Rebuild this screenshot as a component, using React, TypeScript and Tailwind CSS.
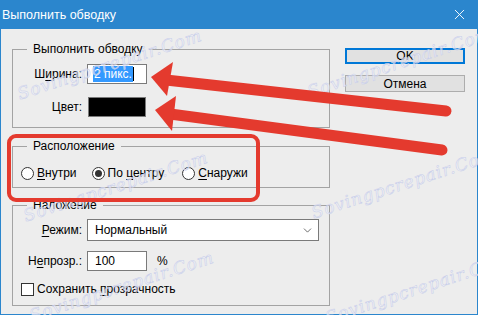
import React from 'react';
import { ChevronDown, X } from 'lucide-react';

const font = "font-['Segoe_UI','Liberation_Sans',Arial,sans-serif]";

const U = ({ children }: { children: React.ReactNode }) => (
  <span className="underline underline-offset-2 decoration-1">{children}</span>
);

const Label = ({ children }: { children: React.ReactNode }) => (
  <span className="w-[69px] shrink-0 text-right">{children}</span>
);

const Radio = ({ checked, children }: { checked?: boolean; children: React.ReactNode }) => (
  <div className="flex items-center gap-[3px]">
    <span className="flex h-[13px] w-[13px] items-center justify-center rounded-full border border-[#333] bg-white">
      {checked && <span className="h-[7px] w-[7px] rounded-full bg-[#333]" />}
    </span>
    <span>{children}</span>
  </div>
);

const marks = [
  { left: 18, top: 84 },
  { left: 24, top: 206 },
  { left: 30, top: 306 },
  { left: 308, top: 82 },
  { left: 312, top: 203 },
  { left: 326, top: 308 },
];

export default function App() {
  return (
    <div className={`relative h-[315px] w-[478px] overflow-hidden bg-[#ededed] text-[12px] leading-[16px] text-black ${font}`}>
      {/* Title bar */}
      <div className="flex h-[29px] items-center justify-between bg-[#2b86cd] pl-[2px] pr-[10px] text-white">
        <span className="text-[12.5px]">Выполнить обводку</span>
        <X size={17} strokeWidth={1.3} className="text-white" />
      </div>

      <div className="flex h-[286px] border-x border-b border-[#2b86cd] pl-[11px] pr-[12px]">
        {/* Left column */}
        <div className="flex w-[318px] flex-col pt-[12px]">
          <fieldset className="border border-[#a3a3a3] pb-[10px]">
            <legend className="ml-[14px] px-[6px]">Выполнить обводку</legend>
            <div className="mt-[7px] flex items-center gap-[5px]">
              <Label>Ш<U>и</U>рина:</Label>
              <div className="flex h-[20px] w-[60px] items-center border border-[#7a7a7a] bg-white pl-[5px]">
                <span className="bg-[#3399ff] px-[1px] text-white">2 пикс.</span>
                <span className="h-[14px] w-px bg-black" />
              </div>
            </div>
            <div className="mt-[13px] flex items-center gap-[6px]">
              <Label>Цвет:</Label>
              <div className="h-[20px] w-[58px] border border-[#7a7a7a] bg-black" />
            </div>
          </fieldset>

          <fieldset className="mt-[10px] border border-[#a3a3a3] pb-[6px]">
            <legend className="ml-[14px] px-[6px]">Расположение</legend>
            <div className="mt-[11px] flex items-center pl-[8px]">
              <Radio>
                <U>В</U>нутри
              </Radio>
              <div className="ml-[15px]">
                <Radio checked>
                  По <U>ц</U>ентру
                </Radio>
              </div>
              <div className="ml-[18px]">
                <Radio>
                  <U>С</U>наружи
                </Radio>
              </div>
            </div>
          </fieldset>

          <fieldset className="mt-[9px] border border-[#a3a3a3] pb-[8px]">
            <legend className="ml-[14px] px-[6px]">Наложение</legend>
            <div className="mt-[6px] flex items-center gap-[5px]">
              <Label>
                <U>Р</U>ежим:
              </Label>
              <div className="flex h-[22px] w-[232px] items-center justify-between border border-[#7a7a7a] bg-white pl-[7px] pr-[4px]">
                <span>Нормальный</span>
                <ChevronDown size={13} strokeWidth={1.3} className="text-[#333]" />
              </div>
            </div>
            <div className="mt-[10px] flex items-center gap-[5px]">
              <Label>
                Н<U>е</U>прозр.:
              </Label>
              <div className="flex h-[20px] w-[60px] items-center border border-[#7a7a7a] bg-white pl-[7px]">
                100
              </div>
              <span className="ml-[5px]">%</span>
            </div>
            <div className="mt-[10px] flex items-center gap-[3px] pl-[8px]">
              <span className="h-[13px] w-[13px] border border-[#333] bg-white" />
              <span>
                Сохранить <U>п</U>розрачность
              </span>
            </div>
          </fieldset>
        </div>

        {/* Buttons */}
        <div className="ml-auto flex w-[120px] flex-col gap-[11px] pt-[19px]">
          <button className="flex h-[16px] items-center justify-center border-2 border-[#0078d7] bg-[#e1e1e1]">
            OK
          </button>
          <button className="flex h-[17px] items-center justify-center border border-[#adadad] bg-[#e1e1e1]">
            Отмена
          </button>
        </div>
      </div>

      {/* Watermarks */}
      {marks.map((m, i) => (
        <span
          key={i}
          className="pointer-events-none absolute origin-left -rotate-[18deg] whitespace-nowrap font-['DejaVu_Serif',serif] text-[17px] italic leading-[20px] tracking-[1px] text-[#f3f4fa]/60 [-webkit-text-stroke:0.5px_#c6cce9]"
          style={{ left: m.left, top: m.top }}
        >
          Sovingpcrepair.Com
        </span>
      ))}

      {/* Red annotations */}
      <svg className="pointer-events-none absolute left-0 top-0" width={478} height={315} viewBox="0 0 478 315">
        <rect x={9} y={136} width={249} height={64} rx={7} fill="none" stroke="#e43a2e" strokeWidth={4} />
        <line x1={166} y1={80} x2={446} y2={111} stroke="#e43a2e" strokeWidth={11} strokeLinecap="round" />
        <polygon points="151,77 173,62 167,96" fill="#e43a2e" />
        <line x1={170} y1={114} x2={442} y2={150} stroke="#e43a2e" strokeWidth={11} strokeLinecap="round" />
        <polygon points="155,110 176,96 172,131" fill="#e43a2e" />
      </svg>
    </div>
  );
}
